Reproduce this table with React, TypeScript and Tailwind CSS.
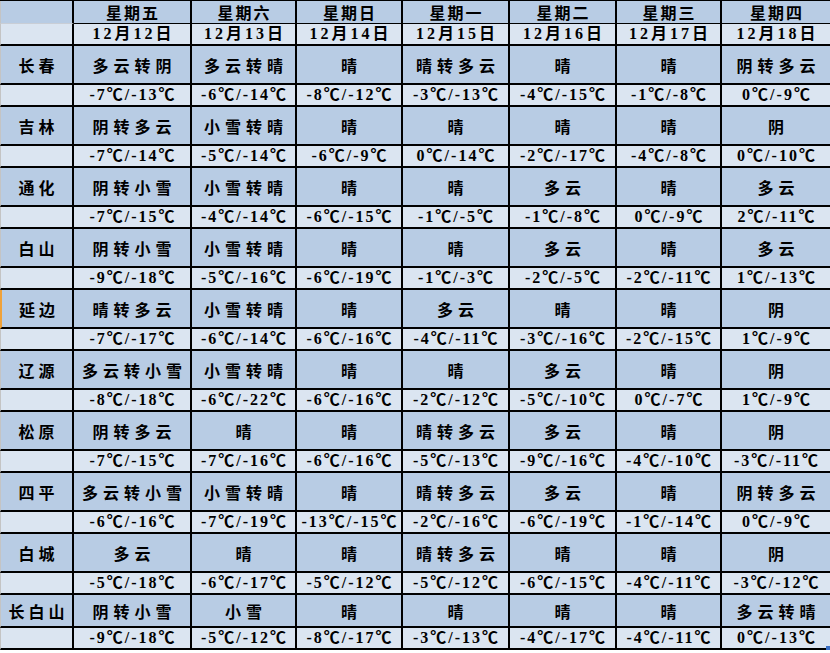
import React from "react";

const days = ["星期五", "星期六", "星期日", "星期一", "星期二", "星期三", "星期四"];
const dates = ["12月12日", "12月13日", "12月14日", "12月15日", "12月16日", "12月17日", "12月18日"];

type City = { name: string; w: string[]; t: string[] };

const cities: City[] = [
  { name: "长春", w: ["多云转阴", "多云转晴", "晴", "晴转多云", "晴", "晴", "阴转多云"], t: ["-7℃/-13℃", "-6℃/-14℃", "-8℃/-12℃", "-3℃/-13℃", "-4℃/-15℃", "-1℃/-8℃", "0℃/-9℃"] },
  { name: "吉林", w: ["阴转多云", "小雪转晴", "晴", "晴", "晴", "晴", "阴"], t: ["-7℃/-14℃", "-5℃/-14℃", "-6℃/-9℃", "0℃/-14℃", "-2℃/-17℃", "-4℃/-8℃", "0℃/-10℃"] },
  { name: "通化", w: ["阴转小雪", "小雪转晴", "晴", "晴", "多云", "晴", "多云"], t: ["-7℃/-15℃", "-4℃/-14℃", "-6℃/-15℃", "-1℃/-5℃", "-1℃/-8℃", "0℃/-9℃", "2℃/-11℃"] },
  { name: "白山", w: ["阴转小雪", "小雪转晴", "晴", "晴", "多云", "晴", "多云"], t: ["-9℃/-18℃", "-5℃/-16℃", "-6℃/-19℃", "-1℃/-3℃", "-2℃/-5℃", "-2℃/-11℃", "1℃/-13℃"] },
  { name: "延边", w: ["晴转多云", "小雪转晴", "晴", "多云", "晴", "晴", "阴"], t: ["-7℃/-17℃", "-6℃/-14℃", "-6℃/-16℃", "-4℃/-11℃", "-3℃/-16℃", "-2℃/-15℃", "1℃/-9℃"] },
  { name: "辽源", w: ["多云转小雪", "小雪转晴", "晴", "晴", "多云", "晴", "阴"], t: ["-8℃/-18℃", "-6℃/-22℃", "-6℃/-16℃", "-2℃/-12℃", "-5℃/-10℃", "0℃/-7℃", "1℃/-9℃"] },
  { name: "松原", w: ["阴转多云", "晴", "晴", "晴转多云", "多云", "晴", "阴"], t: ["-7℃/-15℃", "-7℃/-16℃", "-6℃/-16℃", "-5℃/-13℃", "-9℃/-16℃", "-4℃/-10℃", "-3℃/-11℃"] },
  { name: "四平", w: ["多云转小雪", "小雪转晴", "晴", "晴转多云", "多云", "晴", "阴转多云"], t: ["-6℃/-16℃", "-7℃/-19℃", "-13℃/-15℃", "-2℃/-16℃", "-6℃/-19℃", "-1℃/-14℃", "0℃/-9℃"] },
  { name: "白城", w: ["多云", "晴", "晴", "晴转多云", "晴", "晴", "阴"], t: ["-5℃/-18℃", "-6℃/-17℃", "-5℃/-12℃", "-5℃/-12℃", "-6℃/-15℃", "-4℃/-11℃", "-3℃/-12℃"] },
  { name: "长白山", w: ["阴转小雪", "小雪", "晴", "晴", "晴", "晴", "多云转晴"], t: ["-9℃/-18℃", "-5℃/-12℃", "-8℃/-17℃", "-3℃/-13℃", "-4℃/-17℃", "-4℃/-11℃", "0℃/-13℃"] },
];

const cjk = { fontFamily: '"Noto Sans CJK SC", sans-serif' } as const;
const num = { fontFamily: '"Liberation Serif", "Noto Sans CJK SC", serif' } as const;

function Cell({
  last,
  className,
  children,
  style,
}: {
  last: boolean;
  className: string;
  children?: React.ReactNode;
  style?: React.CSSProperties;
}) {
  return (
    <div
      className={`flex items-center justify-center overflow-hidden whitespace-nowrap font-bold text-black text-[16px] leading-none border-black ${last ? "border-r-0" : "border-r-2"} ${className}`}
      style={style}
    >
      {children}
    </div>
  );
}

export default function App() {
  return (
    <div className="w-[830px] h-[653px] bg-white overflow-hidden relative">
      <div className="grid grid-cols-[74px_118px_105px_106px_107px_107px_105px_108px] border-t border-black">
        {/* header row 1 */}
        <div className="h-[23px] bg-[#b8cce4] border-r-2 border-black border-b border-b-[#c9ced6] border-l border-l-[#c4c4c4]" />
        {days.map((d, i) => (
          <Cell key={d} last={i === 6} className="h-[23px] bg-[#b8cce4] border-b tracking-[2px] pl-[2px]" style={cjk}>
            {d}
          </Cell>
        ))}
        {/* header row 2 */}
        <div className="h-[22px] bg-[#dbe5f1] border-r-2 border-b-2 border-black border-l border-l-[#c4c4c4]" />
        {dates.map((d, i) => (
          <Cell key={d} last={i === 6} className="h-[22px] bg-[#dbe5f1] border-b-2 tracking-[3px] pl-[3px]" style={num}>
            {d}
          </Cell>
        ))}
        {cities.map((c, ci) => {
          const wh = ci === cities.length - 1 ? "h-[33px]" : "h-[39px]";
          return (
            <React.Fragment key={c.name}>
              <div
                className={`${wh} bg-[#b8cce4] border-r-2 border-b-2 border-black flex items-center justify-center font-bold text-[16px] leading-none tracking-[4px] pl-[4px] ${c.name === "延边" ? "border-l-2 border-l-[#f0a23a]" : "border-l border-l-[#c4c4c4]"}`}
                style={cjk}
              >
                {c.name}
              </div>
              {c.w.map((w, i) => (
                <Cell key={i} last={i === 6} className={`${wh} bg-[#b8cce4] border-b-2 tracking-[5px] pl-[5px]`} style={cjk}>
                  {w}
                </Cell>
              ))}
              <div className="h-[22px] bg-[#dbe5f1] border-r-2 border-b-2 border-black border-l border-l-[#c4c4c4]" />
              {c.t.map((t, i) => (
                <Cell key={i} last={i === 6} className="h-[22px] bg-[#dbe5f1] border-b-2 tracking-[2px] pl-[2px]" style={num}>
                  {t}
                </Cell>
              ))}
            </React.Fragment>
          );
        })}
      </div>
      <div className="absolute right-0 top-[646px] w-[4px] h-[4px] bg-[#3a6fc4]" />
    </div>
  );
}
